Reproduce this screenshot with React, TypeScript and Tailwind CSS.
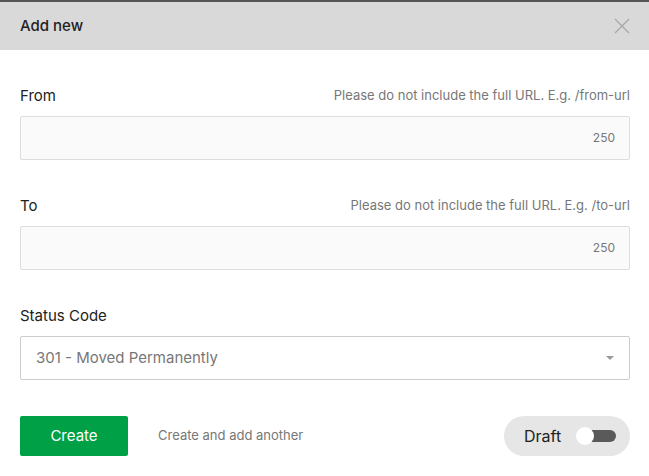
import React from "react";

function Field({ label, hint }: { label: string; hint: string }) {
  return (
    <div className="flex flex-col gap-[10px]">
      <div className="flex items-center justify-between h-5">
        <span className="text-[15px] text-[#222]">{label}</span>
        <span className="text-[13px] text-[#777]">{hint}</span>
      </div>
      <div className="h-[44px] bg-[#fafafa] border border-[#dddddd] rounded-[2px] flex items-center justify-end pr-[14px]">
        <span className="text-[12px] text-[#777]">250</span>
      </div>
    </div>
  );
}

export default function App() {
  return (
    <div
      className="w-[649px] h-[476px] bg-white flex flex-col"
      style={{ fontFamily: "Inter, 'Noto Sans', sans-serif" }}
    >
      <div className="h-[2px] bg-[#555]" />
      <div className="h-[48px] bg-[#d9d9d9] flex items-center justify-between pl-5 pr-[19px]">
        <span className="text-[15px] font-medium text-[#222]">Add new</span>
        <svg width="16" height="16" viewBox="0 0 16 16" className="mt-[-1px]">
          <path d="M1 1 L15 15 M15 1 L1 15" stroke="#a8a8a8" strokeWidth="1.3" fill="none" />
        </svg>
      </div>
      <div className="flex flex-col pl-5 pr-[19px] pt-9 gap-9">
        <Field label="From" hint="Please do not include the full URL. E.g. /from-url" />
        <Field label="To" hint="Please do not include the full URL. E.g. /to-url" />
        <div className="flex flex-col gap-[10px]">
          <div className="flex items-center h-5">
            <span className="text-[15px] text-[#222]">Status Code</span>
          </div>
          <div className="h-[44px] bg-white border border-[#cccccc] rounded-[2px] flex items-center justify-between pl-[15px] pr-[15px]">
            <span className="text-[15px] text-[#777]">301 - Moved Permanently</span>
            <svg width="8" height="5" viewBox="0 0 8 5">
              <path d="M0 0 L8 0 L4 4 Z" fill="#999" />
            </svg>
          </div>
        </div>
        <div className="flex items-center justify-between">
          <div className="flex items-center gap-[30px]">
            <button className="w-[108px] h-[40px] bg-[#00a046] rounded-[2px] text-white text-[15px]">
              Create
            </button>
            <span className="text-[13px] text-[#777]">Create and add another</span>
          </div>
          <div className="w-[126px] h-[40px] bg-[#e6e6e6] rounded-full flex items-center pl-5 gap-[15px]">
            <span className="text-[16px] text-[#222]">Draft</span>
            <div className="relative w-[40px] h-[18px] flex items-center">
              <div className="absolute left-[7px] right-0 h-[12px] bg-[#5a5a5a] rounded-full" />
              <div className="absolute left-0 w-[18px] h-[18px] bg-white rounded-full" />
            </div>
          </div>
        </div>
      </div>
    </div>
  );
}
